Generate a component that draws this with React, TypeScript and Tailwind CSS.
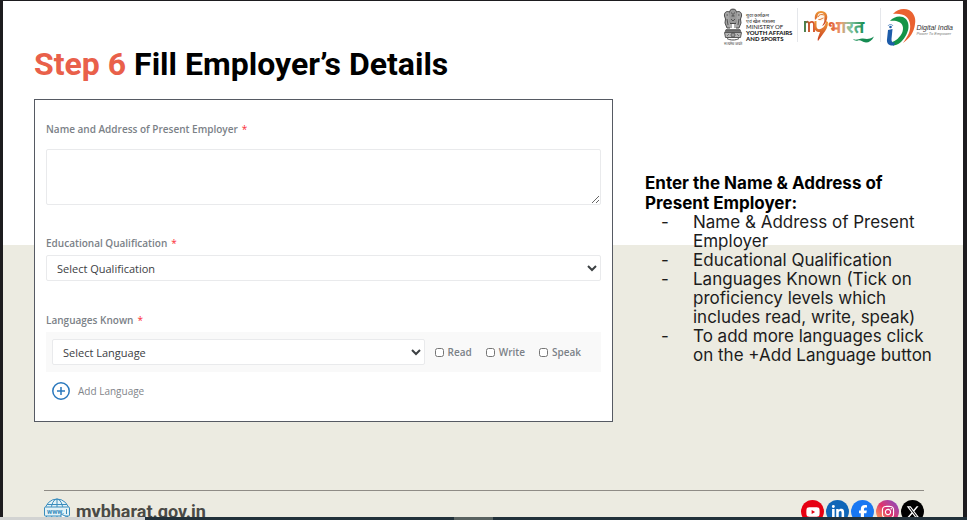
import React, { useState } from "react";
import { FaFacebookF, FaInstagram, FaLinkedinIn, FaXTwitter, FaYoutube } from "react-icons/fa6";

const proficiencies = ["Read", "Write", "Speak"];

const steps = [
  "Name & Address of Present Employer",
  "Educational Qualification",
  "Languages Known (Tick on proficiency levels which includes read, write, speak)",
  "To add more languages click on the +Add Language button",
];

const socials = [
  { name: "YouTube", icon: FaYoutube, style: "bg-[#e60012]" },
  { name: "LinkedIn", icon: FaLinkedinIn, style: "bg-[#0f66b8]" },
  { name: "Facebook", icon: FaFacebookF, style: "bg-[#1877f2]" },
  {
    name: "Instagram",
    icon: FaInstagram,
    style: "bg-linear-to-tr from-[#fdb03c] via-[#e1306c] to-[#7a3bc8]",
  },
  { name: "X", icon: FaXTwitter, style: "bg-black" },
];

function Emblem() {
  return (
    <svg viewBox="0 0 20 38" className="h-[38px] w-5" fill="none" stroke="#4a4a4a" aria-hidden="true">
      <path d="M7 2.5C8 .6 12 .6 13 2.5l1 3 .5 5-1.500 5h-6l-1.500-5 .5-5z" fill="#999" />
      <path
        d="M6.500 4C3 2.500 1 5 1.500 8l1 3-.5 4 2 5h3M13.500 4C17 2.500 19 5 18.500 8l-1 3 .5 4-2 5h-3"
        fill="#a5a5a5"
      />
      <path
        d="M8 5h1M11 5h1M8.500 8h3M10 5v3M3.500 7h1.500M15 7h1.500M8 11l2 2 2-2M4 11l1 6M16 11l-1 6M8 15v5M12 15v5"
        strokeWidth=".9"
      />
      <path d="M3 21.500h14l1 2H2z" fill="#666" strokeWidth=".6" />
      <path d="M1.500 24.500h17l-1 5h-15z" fill="#b5b5b5" strokeWidth=".9" />
      <circle cx="10" cy="27" r="2" fill="#eee" strokeWidth=".9" />
      <path d="M10 25v4M8 27h4M4 28l2-2M14 26l2 2" strokeWidth=".6" />
      <path d="M4 30.500c3 2 9 2 12 0" />
      <text x="10" y="36.500" textAnchor="middle" fontSize="4" fill="#333" stroke="none">
        सत्यमेव जयते
      </text>
    </svg>
  );
}

function MyBharatLogo() {
  return (
    <svg viewBox="0 0 72 38" className="h-[38px] w-18" role="img" aria-label="MY Bharat">
      <defs>
        <linearGradient id="tricolour" x1="0" x2="1">
          <stop offset="0" stopColor="#dc4f28" />
          <stop offset=".35" stopColor="#ec9a70" />
          <stop offset=".6" stopColor="#86c4a0" />
          <stop offset="1" stopColor="#138a4b" />
        </linearGradient>
        <linearGradient id="flame" x1="0" y1="0" x2="0" y2="1">
          <stop offset="0" stopColor="#ef9a38" />
          <stop offset="1" stopColor="#c83c20" />
        </linearGradient>
        <linearGradient id="letterM" x1="0" x2="1">
          <stop offset="0" stopColor="#3f7d48" />
          <stop offset=".4" stopColor="#c4542b" />
          <stop offset="1" stopColor="#d9582c" />
        </linearGradient>
      </defs>
      <path
        d="M2 13v11M2 15c2-2 4-1.500 4 1v8M6 15.500c2-2.500 5-2 5 1V24"
        fill="none"
        stroke="url(#letterM)"
        strokeWidth="1.900"
      />
      <path
        d="M13.500 13v5c0 3 2 4 5 2.500 3-1.500 4-4 4.500-7.500l2 1c0 5-2 8-5 12l-5 7c-1-2 1-6 2-9-4 0-6-2-5.500-6V13z"
        fill="url(#flame)"
      />
      <path d="M12 12C11 6 14 3 18 3c5 0 7 4 6 8-1 3-2 6-5 7 2-3 3-5 2-8-1-2-6-2-7 0z" fill="url(#flame)" />
      <ellipse cx="18" cy="9" rx="3.500" ry="4" fill="#fff6ea" />
      <path d="M15 9c1-2.500 3-3 6-2M15.500 11.500c2 .5 3-1 5-1.500" stroke="#dd7430" fill="none" />
      <text x="25" y="25" fontSize="17" fontWeight="700" fill="url(#tricolour)">
        भारत
      </text>
      <path d="M50 31c4 2 6-1 10-.5 4 .5 6 1 11-2-2 4-5 6-8 6-4 0-5-3-8-2-2 .6-4 0-5-1.500z" fill="#158b52" />
    </svg>
  );
}

function DigitalIndiaLogo() {
  return (
    <svg viewBox="0 0 30 38" className="h-[38px] w-[30px]" aria-hidden="true">
      <path d="M7 6C11 1 18 0 23 2c5 3 7 8 6 14-1 8-5 14-12 19 5-7 8-12 7-19C23 9 18 5 7 6z" fill="#ea6230" />
      <path
        d="M4 13C8 8 16 7 20 11c4 5 3 12-1 18-3 5-7 8-12 8.500l-1-3.500c4-1 8-5 10-9 2-5 1-9-3-11-3-1.500-6-1.500-9-1z"
        fill="#149447"
      />
      <path d="M2 22l4.500-1-1 10c0 3 1 4 3.500 3.500L8 37.500c-5 .6-7.500-2-7-6z" fill="#1d5ca9" />
      <circle cx="4.500" cy="19" r="1.300" fill="#1d5ca9" />
      <path d="M2 18c1-2 4-2 5 0" fill="none" stroke="#3f78b8" strokeWidth=".8" />
    </svg>
  );
}

function GlobeIcon() {
  return (
    <svg viewBox="0 0 26 26" className="size-[26px]" fill="none" stroke="#3a8dbd" aria-hidden="true">
      <circle cx="13" cy="13" r="12" fill="#e3f2f6" />
      <ellipse cx="13" cy="13" rx="6" ry="12" />
      <path d="M13 1v24M3 6.500h20M3 20h20" />
      <rect x=".5" y="9" width="25" height="9" rx="1" fill="#e3f2f6" />
      <text
        x="11.500"
        y="15.500"
        textAnchor="middle"
        fontSize="7"
        fontWeight="700"
        fill="#3a8dbd"
        stroke="none"
        className="font-['Roboto',sans-serif]"
      >
        www.
      </text>
      <path d="M22.500 11v5" />
      <path d="M17 16l6 3-3 1 2 3-2 1-1-3-2 2z" fill="#fff" />
    </svg>
  );
}

function PlusCircle() {
  return (
    <svg viewBox="0 0 18 18" className="size-[18px]" fill="none" stroke="#2a78bd" strokeWidth="1.500" aria-hidden="true">
      <circle cx="9" cy="9" r="8.200" />
      <path d="M9 5v8M5 9h8" />
    </svg>
  );
}

function FieldLabel({ htmlFor, children }: { htmlFor: string; children: React.ReactNode }) {
  return (
    <label htmlFor={htmlFor} className="block text-[10px] leading-4 font-semibold text-[#7b8187]">
      {children}
      <span className="ml-1 font-normal text-red-500">*</span>
    </label>
  );
}

function EmployerForm() {
  const [checked, setChecked] = useState<string[]>([]);

  const toggle = (item: string) => {
    setChecked((prev) => (prev.includes(item) ? prev.filter((p) => p !== item) : [...prev, item]));
  };

  return (
    <form className="border border-[#565a63] bg-white px-[11px] py-[21px] font-['Open_Sans','Noto_Sans',sans-serif]">
      <FieldLabel htmlFor="employer">Name and Address of Present Employer</FieldLabel>
      <textarea
        id="employer"
        className="mt-3 block h-14 w-full rounded-xs border border-[#e9eaec] bg-white p-2 text-[11px] outline-none"
      />

      <div className="mt-[30px]">
        <FieldLabel htmlFor="qualification">Educational Qualification</FieldLabel>
        <select
          id="qualification"
          className="mt-1 block h-[26px] w-full rounded-xs border border-[#e9eaec] bg-white pl-1.5 text-[11px] text-[#3c4043]"
        >
          <option>Select Qualification</option>
        </select>
      </div>

      <div className="mt-[31px]">
        <FieldLabel htmlFor="language">Languages Known</FieldLabel>
        <div className="mt-1 flex h-10 items-center gap-2.5 bg-[#f9f9f9] pr-5 pl-1.5">
          <select
            id="language"
            className="h-[26px] min-w-0 flex-1 rounded-xs border border-[#e9eaec] bg-white pl-1.5 text-[11px] text-[#3c4043]"
          >
            <option>Select Language</option>
          </select>
          <div className="flex gap-3.5">
            {proficiencies.map((item) => (
              <label key={item} className="flex items-center gap-1 text-[10px] leading-4 font-semibold text-[#7b8187]">
                <input
                  type="checkbox"
                  checked={checked.includes(item)}
                  onChange={() => toggle(item)}
                  className="size-[9px]"
                />
                {item}
              </label>
            ))}
          </div>
        </div>
      </div>

      <button type="button" className="mt-2.5 ml-1.5 flex items-center gap-2 text-[10px] leading-4 text-[#7f858a]">
        <PlusCircle />
        Add Language
      </button>
    </form>
  );
}

export default function App() {
  return (
    <div className="flex h-screen flex-col bg-[#1d1c1f] pt-px">
      <div className="mr-1 ml-[3px] flex min-h-0 flex-1 flex-col overflow-hidden bg-[linear-gradient(to_bottom,#fff_244px,#ecebe1_244px)]">
        <header className="flex h-[43px] shrink-0 items-start justify-end gap-[5px] pt-[7px] pr-2.5">
          <div className="flex items-start gap-[3px] font-['Lato',sans-serif] text-[#222]">
            <Emblem />
            <div className="pt-1 text-[6px] leading-[6px]">
              <p className="text-[5px]">युवा कार्यक्रम</p>
              <p className="text-[5px]">एवं खेल मंत्रालय</p>
              <p>MINISTRY OF</p>
              <p className="font-black">YOUTH AFFAIRS</p>
              <p className="font-black">AND SPORTS</p>
            </div>
          </div>
          <div className="h-[34px] w-px bg-gray-200" />
          <MyBharatLogo />
          <div className="h-[34px] w-px bg-gray-200" />
          <div className="flex items-center">
            <DigitalIndiaLogo />
            <div className="pt-1.5 font-['Liberation_Sans',sans-serif] italic">
              <p className="text-[7px] leading-[7px] text-[#333]">Digital India</p>
              <p className="text-[4px] leading-[6px] text-[#777]">Power To Empower</p>
            </div>
          </div>
        </header>

        <main className="shrink-0 pr-6 pl-[31px]">
          <h1 className="font-['Roboto',sans-serif] text-[32px] leading-10 font-bold text-black">
            <span className="text-[#e9604a]">Step 6</span> Fill Employer’s Details
          </h1>

          <div className="mt-[15px] grid grid-cols-[579fr_294fr] items-start gap-8">
            <EmployerForm />
            <section className="mt-[74px] font-['Inter',sans-serif] text-[#1c1c1c]">
              <h2 className="text-[17px] leading-5 font-bold text-black">
                Enter the Name & Address of Present Employer:
              </h2>
              <ul className="text-[17px] leading-[19px]">
                {steps.map((step) => (
                  <li key={step} className="flex pl-4">
                    <span className="w-8 shrink-0">-</span>
                    <span>{step}</span>
                  </li>
                ))}
              </ul>
            </section>
          </div>
        </main>

        <footer className="mr-[39px] ml-[41px] mt-[68px] flex shrink-0 items-start justify-between border-t border-[#8f8c86] pt-[7px]">
          <a href="https://mybharat.gov.in" className="flex items-start gap-1.5 text-[#4a4a46]">
            <GlobeIcon />
            <span className="pt-1 font-['Roboto',sans-serif] text-[18px] leading-5 font-bold">mybharat.gov.in</span>
          </a>
          <div className="flex gap-0.5 pt-0.5">
            {socials.map(({ name, icon: Icon, style }) => (
              <a
                key={name}
                href="#"
                aria-label={name}
                className={`flex size-[23px] items-center justify-center rounded-full text-white ${style}`}
              >
                <Icon className="size-3.5" />
              </a>
            ))}
          </div>
        </footer>
      </div>

      <div className="flex h-[3px] shrink-0 bg-[#22313a]">
        <div className="w-[15%] bg-[#d2d3d2]" />
        <div className="ml-[32%] w-[4%] bg-[#596260]" />
      </div>
    </div>
  );
}
